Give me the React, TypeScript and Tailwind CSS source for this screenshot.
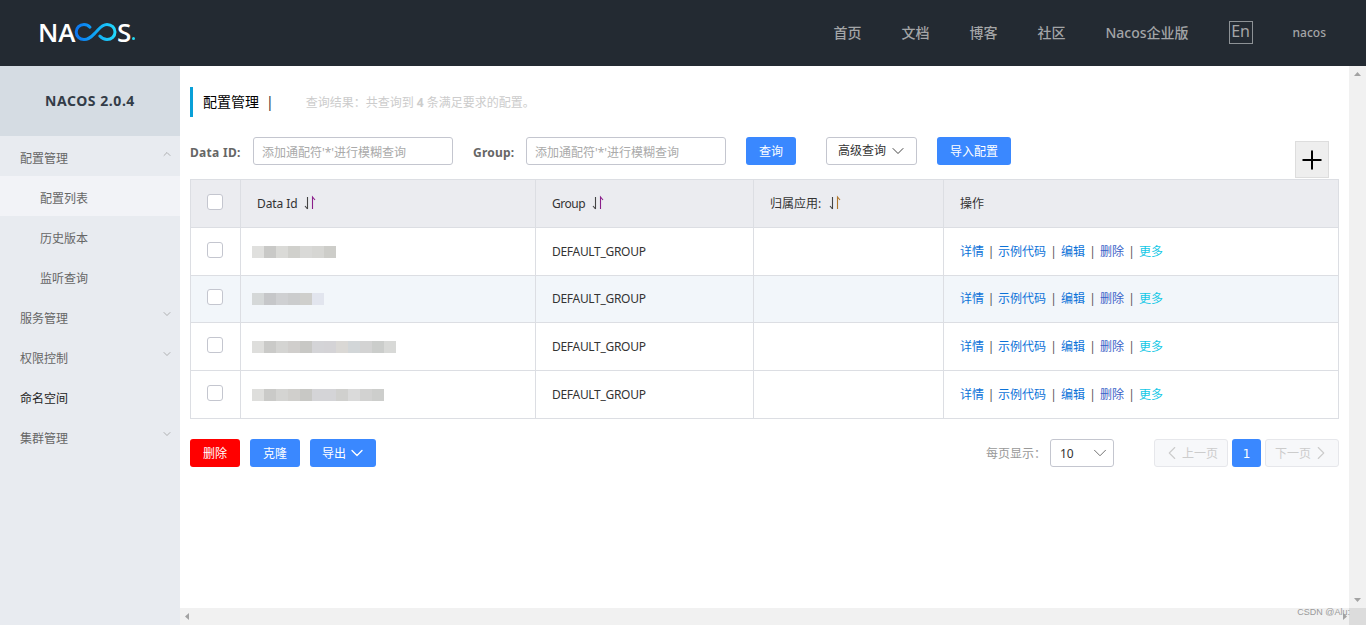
import { ChevronDown, ChevronLeft, ChevronRight, ChevronUp, Plus } from "lucide-react";

const FONT = "font-['Noto_Sans','Noto_Sans_CJK_SC',sans-serif]";

function Logo() {
  return (
    <div className="flex items-center h-[18px] -mt-[2px] -ml-[2px] text-white font-['Open_Sans',sans-serif] font-semibold text-[26px] leading-none">
      <span className="w-[37px] tracking-[0px]">NA</span>
      <svg width="44" height="20" viewBox="0 0 44 20" fill="none" className="-ml-[1px]">
        <defs>
          <linearGradient id="nacosGrad" x1="0" x2="44" y1="0" y2="0" gradientUnits="userSpaceOnUse">
            <stop offset="0" stopColor="#0b6ff0" />
            <stop offset="0.5" stopColor="#0fa8f5" />
            <stop offset="1" stopColor="#25e0ff" />
          </linearGradient>
        </defs>
        <path
          d="M16 5.2 C14.4 3.4 12.4 2.4 10 2.4 C5.6 2.4 2.2 5.6 2.2 10 C2.2 14.4 5.6 17.6 10 17.6 C16 17.6 19 13 22 10 C25 7 27.5 2.4 33 2.4 C37.6 2.4 41 5.6 41 10 C41 14.4 37.6 17.6 33 17.6 C30 17.6 27.6 16 25.8 14"
          stroke="url(#nacosGrad)"
          strokeWidth="3"
          strokeLinecap="round"
        />
      </svg>
      <span className="-ml-[1px]">S</span>
      <span className="w-[3px] h-[3px] rounded-full bg-[#25d8f0] self-end ml-[1px] mb-[1px]" />
    </div>
  );
}

function SortIcon({ tint, className }: { tint: string; className: string }) {
  return (
    <svg width="12" height="16" viewBox="0 0 12 16" fill="none" className={`-mt-[2px] ${className}`}>
      <path d="M3.5 2 V14 M1 11 L3.5 14" stroke="#444" strokeWidth="1.1" />
      <path d="M8.5 14 V2 L11 5" stroke={tint} strokeWidth="1.1" />
    </svg>
  );
}

function Checkbox() {
  return <span className="block w-4 h-4 mb-1 rounded-[3px] border border-[#c4c6cf] bg-white" />;
}

function Mosaic({ colors }: { colors: string[] }) {
  return (
    <div className="flex h-[12px]">
      {colors.map((c, i) => (
        <span key={i} className="block w-[12px] h-full" style={{ background: c }} />
      ))}
    </div>
  );
}

function SideItem({ label, open, closed, sub, active, dark }: { label: string; open?: boolean; closed?: boolean; sub?: boolean; active?: boolean; dark?: boolean }) {
  return (
    <div
      className={`h-10 flex items-center justify-between text-xs pr-[7px] ${sub ? "pl-10" : "pl-5"} ${active ? "bg-[#f2f3f7]" : ""} ${dark ? "text-[#222]" : "text-[#666]"}`}
    >
      <span className="mt-[6px]">{label}</span>
      {open && <ChevronUp size={12} strokeWidth={1.2} className="text-[#888] -mt-[4px]" />}
      {closed && <ChevronDown size={12} strokeWidth={1.2} className="text-[#888] -mt-[4px]" />}
    </div>
  );
}

const rows = [
  { bg: "bg-white", h: "h-[48px]", mosaic: ["#e0e0de", "#c9c9c7", "#dadad7", "#d0d0cc", "#d9d9d7", "#d6d6d3", "#cdcdc9"] },
  { bg: "bg-[#f2f6fa]", h: "h-[47px]", mosaic: ["#d5d8d8", "#c6c7c9", "#cfd0d2", "#cbcccd", "#cfcfcc", "#e2e5ee"] },
  { bg: "bg-white", h: "h-[48px]", mosaic: ["#dededc", "#cacac8", "#d4d4d2", "#d0cecc", "#c8c8c5", "#d4d4d7", "#d4d3d6", "#dad8d5", "#d2d6d8", "#d3d3d3", "#cbcdcb", "#d8d9d7"] },
  { bg: "bg-white", h: "h-[48px]", mosaic: ["#dededc", "#cacac8", "#d4d4d2", "#d0cfcc", "#c8c8c5", "#d4d4d7", "#d4d4d7", "#d0d0ce", "#dadada", "#d2d2d1", "#cdcecc"] },
];

function Actions() {
  const sep = "text-center text-[#555]";
  return (
    <div className="flex items-center text-xs text-[#0c72d8]">
      <span>详情</span>
      <span className={`w-[14px] ${sep}`}>|</span>
      <span>示例代码</span>
      <span className={`w-[15px] ${sep}`}>|</span>
      <span>编辑</span>
      <span className={`w-[15px] ${sep}`}>|</span>
      <span className="text-[#3a62c8]">删除</span>
      <span className={`w-[15px] ${sep}`}>|</span>
      <span className="text-[#14c8e6]">更多</span>
    </div>
  );
}

const th = "border border-[#dcdee3] bg-[#ebecf0] text-left font-normal text-xs text-[#333] pl-4 pr-0 align-middle";
const td = "border border-[#dcdee3] text-xs text-[#333] pl-4 pr-0 align-middle";

export default function App() {
  return (
    <div className={`w-[1366px] h-[625px] overflow-hidden flex flex-col bg-white ${FONT}`}>
      <header className="h-[66px] shrink-0 bg-[#232a32] flex items-center pl-10 pr-10">
        <Logo />
        <nav className="ml-auto flex items-center gap-10 text-sm font-medium text-[#a3a5a7]">
          <span>首页</span>
          <span>文档</span>
          <span>博客</span>
          <span>社区</span>
          <span>Nacos企业版</span>
          <span className="w-[24px] h-[23px] border border-[#8d9296] flex items-center justify-center text-base leading-none -mt-[1px] pb-[3px] font-normal">En</span>
          <span className="text-xs">nacos</span>
        </nav>
      </header>
      <div className="flex flex-1 min-h-0 relative">
        <aside className="w-[180px] shrink-0 bg-[#e8ebf0]">
          <div className="h-[70px] bg-[#d5dce3] flex items-center justify-center text-sm font-bold tracking-[0.55px] text-[#333c48]">NACOS 2.0.4</div>
          <SideItem label="配置管理" open />
          <SideItem label="配置列表" sub active />
          <SideItem label="历史版本" sub />
          <SideItem label="监听查询" sub />
          <SideItem label="服务管理" closed />
          <SideItem label="权限控制" closed />
          <SideItem label="命名空间" dark />
          <SideItem label="集群管理" closed />
        </aside>
        <div className="flex-1 min-w-0 flex flex-col">
          <div className="flex-1 min-h-0 flex">
            <main className="flex-1 min-w-0 pl-[10px] pr-[10px] pt-[21px]">
              <div className="h-[30px] flex items-center border-l-[3px] border-[#09a0d8] pl-[10px]">
                <span className="text-sm text-black">配置管理</span>
                <span className="text-sm text-[#333] ml-[7px]">|</span>
                <span className="text-xs text-[#cccccc] ml-[32px] pt-[2px]">
                  查询结果：共查询到 <b className="font-bold">4</b> 条满足要求的配置。
                </span>
              </div>
              <div className="mt-5 h-[42px] flex items-start text-xs">
                <span className="h-7 flex items-center pt-[3px] w-[63px] font-bold tracking-[0.3px] text-[#666]">Data ID:</span>
                <div className="w-[200px] h-7 border border-[#c4c6cf] rounded-[3px] flex items-center pl-2 pt-[3px] text-[#aaa]">添加通配符'*'进行模糊查询</div>
                <span className="h-7 flex items-center pt-[3px] ml-5 w-[53px] font-bold tracking-[0.2px] text-[#666]">Group:</span>
                <div className="w-[200px] h-7 border border-[#c4c6cf] rounded-[3px] flex items-center pl-2 pt-[3px] text-[#aaa]">添加通配符'*'进行模糊查询</div>
                <button className="ml-5 w-[50px] h-7 pt-[2px] bg-[#3a88ff] rounded-[3px] text-white text-xs">查询</button>
                <button className="ml-[30px] w-[91px] h-7 border border-[#c4c6cf] rounded-[3px] text-[#333] text-xs flex items-center justify-center gap-[2px] pl-[3px]">
                  高级查询
                  <ChevronDown size={20} strokeWidth={1.1} />
                </button>
                <button className="ml-5 w-[74px] h-7 pt-[2px] bg-[#3a88ff] rounded-[3px] text-white text-xs">导入配置</button>
                <button className="ml-auto mr-[10px] mt-1 w-[34px] h-[37px] bg-[#eeeeee] border border-[#dddddd] flex items-center justify-center text-black">
                  <Plus size={30} strokeWidth={1.6} />
                </button>
              </div>
              <table className="w-[1148px] table-fixed border-collapse">
                <colgroup>
                  <col className="w-[50px]" />
                  <col className="w-[295px]" />
                  <col className="w-[218px]" />
                  <col className="w-[190px]" />
                  <col className="w-[395px]" />
                </colgroup>
                <thead>
                  <tr className="h-[48px]">
                    <th className={th}><Checkbox /></th>
                    <th className={th}><div className="flex items-center tracking-[-0.1px]">Data Id<SortIcon tint="#8a1f8a" className="ml-[7px]" /></div></th>
                    <th className={th}><div className="flex items-center tracking-[-0.5px]">Group<SortIcon tint="#8a1f8a" className="ml-[7px]" /></div></th>
                    <th className={th}><div className="flex items-center">归属应用:<SortIcon tint="#b0762a" className="ml-[8px]" /></div></th>
                    <th className={th}>操作</th>
                  </tr>
                </thead>
                <tbody>
                  {rows.map((r, i) => (
                    <tr key={i} className={`${r.h} ${r.bg}`}>
                      <td className={td}><Checkbox /></td>
                      <td className={`${td} pl-[11px]`}><Mosaic colors={r.mosaic} /></td>
                      <td className={`${td} tracking-[-0.3px]`}>DEFAULT_GROUP</td>
                      <td className={td}></td>
                      <td className={td}><Actions /></td>
                    </tr>
                  ))}
                </tbody>
              </table>
              <div className="mt-5 h-7 flex items-center text-xs">
                <button className="w-[50px] h-7 pt-[2px] bg-[#ff0000] rounded-[3px] text-white">删除</button>
                <button className="ml-[10px] w-[50px] h-7 pt-[2px] bg-[#3a88ff] rounded-[3px] text-white">克隆</button>
                <button className="ml-[10px] w-[66px] h-7 bg-[#3a88ff] rounded-[3px] text-white flex items-center justify-center gap-[1px] pl-[3px]">
                  <span className="pt-[2px]">导出</span>
                  <ChevronDown size={20} strokeWidth={1.6} />
                </button>
                <span className="ml-auto text-[#999] pt-[2px]">每页显示：</span>
                <div className="ml-[4px] w-[64px] h-7 border border-[#c4c6cf] rounded-[3px] flex items-center justify-between pl-[9px] pr-[2px] text-[#333]">
                  <span className="pt-[2px]">10</span>
                  <ChevronDown size={22} strokeWidth={1} className="text-[#666]" />
                </div>
                <div className="ml-10 w-[74px] h-7 border border-[#e6e7eb] bg-[#f7f8fa] rounded-[3px] flex items-center justify-center text-[#cccccc]">
                  <ChevronLeft size={22} strokeWidth={1.2} className="-ml-[3px] -mr-[1px]" />
                  <span className="pt-[2px]">上一页</span>
                </div>
                <div className="ml-1 w-[29px] h-7 bg-[#3a88ff] rounded-[3px] flex items-center justify-center text-white font-['DejaVu_Sans',sans-serif] pt-[1px]">1</div>
                <div className="ml-1 w-[74px] h-7 border border-[#e6e7eb] bg-[#f7f8fa] rounded-[3px] flex items-center justify-center text-[#cccccc]">
                  <span className="pt-[2px]">下一页</span>
                  <ChevronRight size={22} strokeWidth={1.2} className="-mr-[3px] -ml-[1px]" />
                </div>
              </div>
            </main>
            <div className="w-[17px] shrink-0 bg-[#f1f1f1] flex flex-col items-center justify-between py-[6px]">
              <svg width="7" height="4" viewBox="0 0 7 4"><path d="M0 4 L3.5 0 L7 4 Z" fill="#a3a3a3" /></svg>
              <svg width="7" height="4" viewBox="0 0 7 4"><path d="M0 0 L3.5 4 L7 0 Z" fill="#a3a3a3" /></svg>
            </div>
          </div>
          <div className="h-[17px] shrink-0 bg-[#f1f1f1] flex items-center">
            <svg width="4" height="7" viewBox="0 0 4 7" className="ml-[5px]"><path d="M4 0 L0 3.5 L4 7 Z" fill="#a3a3a3" /></svg>
            <svg width="4" height="7" viewBox="0 0 4 7" className="ml-auto mr-[2px]"><path d="M0 0 L4 3.5 L0 7 Z" fill="#a3a3a3" /></svg>
            <div className="w-[17px] h-full bg-[#dcdcdc]" />
          </div>
        </div>
        <span className="absolute right-[16px] bottom-[8px] text-[9px] leading-none text-[#9a9a9a] font-['Liberation_Sans',sans-serif]">CSDN @Alu:</span>
      </div>
    </div>
  );
}
